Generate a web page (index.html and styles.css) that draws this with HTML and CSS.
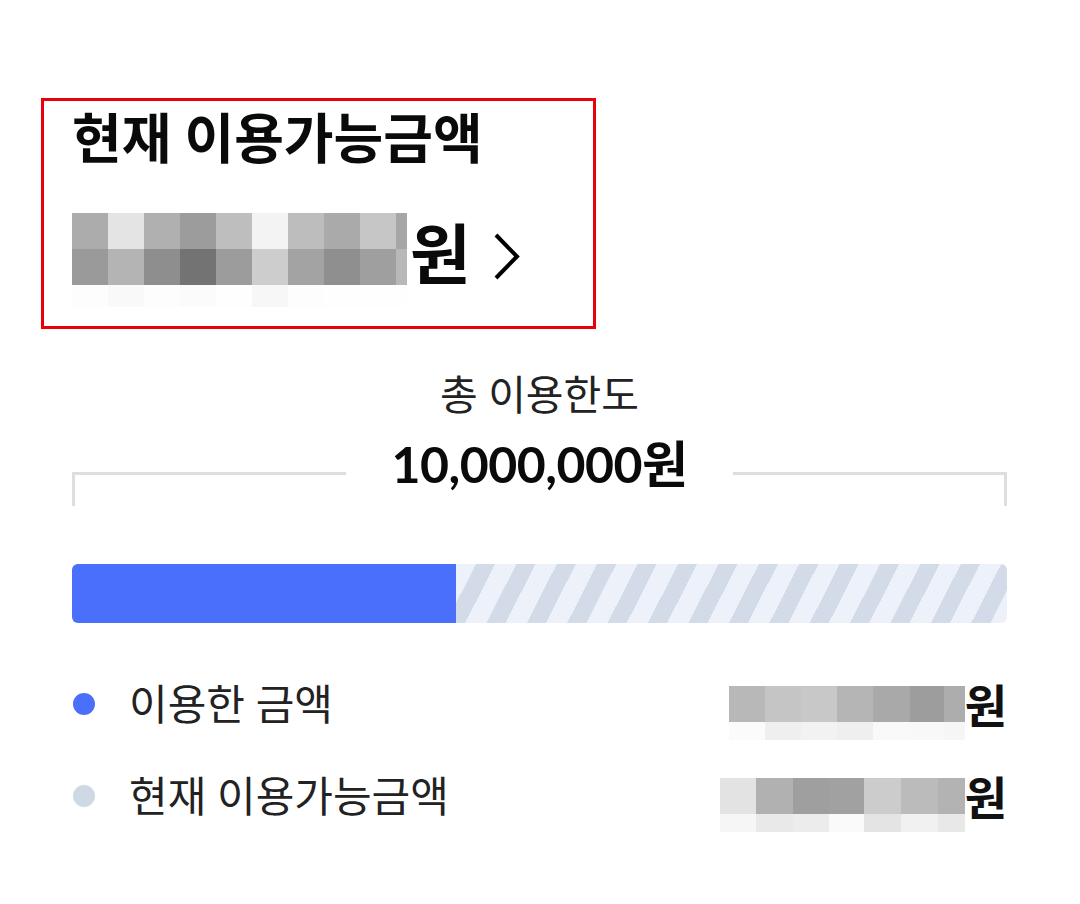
FILE: index.html
```html
<!DOCTYPE html>
<html lang="ko">

<head>
  <meta charset="UTF-8">
  <meta name="viewport" content="width=device-width, initial-scale=1.0">
  <title>이용한도</title>

  <link rel="stylesheet" href="styles.css">
</head>

<body>
  <main class="limit-card">
    <section class="available-box">
      <h1 class="available-title">현재 이용가능금액</h1>
      <a class="available-amount" href="#">
        <span class="mosaic mosaic-main"></span>
        <span class="won won-large">원</span>
        <svg class="chevron" width="30" height="50" viewBox="0 0 30 50" aria-hidden="true">
          <polyline points="3,3 24,24.5 3,46" fill="none" stroke="#000" stroke-width="4" stroke-linejoin="miter"/>
        </svg>
      </a>
    </section>

    <section class="total-limit">
      <p class="total-label">총 이용한도</p>
      <div class="total-row">
        <span class="bracket bracket-left"></span>
        <strong class="total-amount">10,000,000원</strong>
        <span class="bracket bracket-right"></span>
      </div>
    </section>

    <div class="usage-bar">
      <div class="usage-fill" style="width: 41.07%"></div>
    </div>

    <ul class="legend">
      <li class="legend-row">
        <span class="legend-name"><span class="dot dot-used"></span>이용한 금액</span>
        <span class="legend-value"><span class="mosaic mosaic-used"></span><span class="won">원</span></span>
      </li>
      <li class="legend-row">
        <span class="legend-name"><span class="dot dot-left"></span>현재 이용가능금액</span>
        <span class="legend-value"><span class="mosaic mosaic-left"></span><span class="won">원</span></span>
      </li>
    </ul>
  </main>
</body>

</html>
```

FILE: styles.css
```css
body {
  margin: 0;
  background-color: #fff;
  color: #111;
  font-family: Lato, "Noto Sans CJK KR", sans-serif;
}

.limit-card {
  padding: 98px 73px 0 72px;
}

/* red box round the top block */
.available-box {
  box-sizing: border-box;
  width: 555px;
  margin-left: -31px;
  padding: 8px 28px 19px;
  border: 3px solid #e8000b;
}

.available-title {
  margin: 0;
  color: #0a0a0a;
  font-size: 54px;
  line-height: 60px;
  font-weight: 700;
}

.available-amount {
  display: flex;
  align-items: flex-start;
  margin-top: 44px;
  color: #0a0a0a;
  text-decoration: none;
}

.won {
  display: block;
  font-weight: 700;
  font-size: 46px;
  line-height: 46px;
}

.won-large {
  margin: 8px 0 0 3px;
  font-size: 66px;
  line-height: 66px;
}

.chevron {
  margin: 19px 0 0 22px;
}

/* blurred amounts */
.mosaic {
  display: block;
  flex-shrink: 0;
}

.mosaic-main {
  width: 335px;
  height: 94px;
  background:
    linear-gradient(to right, #acacac 0 36px, #e4e4e4 36px 72px, #b0b0b0 72px 108px, #9c9c9c 108px 144px, #bebebe 144px 180px, #f3f3f3 180px 216px, #bdbdbd 216px 252px, #aaaaaa 252px 288px, #c6c6c6 288px 324px, #a6a6a6 324px) 0 0 / 100% 36px no-repeat,
    linear-gradient(to right, #9a9a9a 0 36px, #b4b4b4 36px 72px, #8e8e8e 72px 108px, #737373 108px 144px, #9c9c9c 144px 180px, #cdcdcd 180px 216px, #a3a3a3 216px 252px, #8f8f8f 252px 288px, #9f9f9f 288px 324px, #b8b8b8 324px) 0 36px / 100% 36px no-repeat,
    linear-gradient(to right, #fdfdfd 0 36px, #f9f9f9 36px 72px, #fdfdfd 72px 108px, #fbfbfb 108px 144px, #fefefe 144px 180px, #f7f7f7 180px 216px, #fdfdfd 216px 252px, #fefefe 252px) 0 72px / 100% 22px no-repeat;
}

.mosaic-used {
  width: 236px;
  height: 54px;
  background:
    linear-gradient(to right, #b8b8b8 0 36px, #c5c5c5 36px 72px, #c8c8c8 72px 108px, #b5b5b5 108px 144px, #a9a9a9 144px 181px, #9d9d9d 181px 215px, #adadad 215px) 0 0 / 100% 36px no-repeat,
    linear-gradient(to right, #fbfbfb 0 36px, #efefef 36px 72px, #f2f2f2 72px 108px, #efefef 108px 144px, #f9f9f9 144px 181px, #f8f8f8 181px 215px, #f6f6f6 215px) 0 36px / 100% 18px no-repeat;
}

.mosaic-left {
  width: 245px;
  height: 54px;
  background:
    linear-gradient(to right, #e3e3e3 0 36px, #b1b1b1 36px 73px, #9f9f9f 73px 109px, #a1a1a1 109px 144px, #cccccc 144px 181px, #bbbbbb 181px 218px, #b3b3b3 218px) 0 0 / 100% 36px no-repeat,
    linear-gradient(to right, #f6f6f6 0 36px, #e9e9e9 36px 73px, #ececec 73px 109px, #fafafa 109px 144px, #e4e4e4 144px 181px, #f1f1f1 181px 218px, #e8e8e8 218px) 0 36px / 100% 18px no-repeat;
}

/* total limit */
.total-limit {
  margin-top: 43px;
  text-align: center;
}

.total-label {
  margin: 0;
  color: #222;
  font-size: 41px;
  line-height: 46px;
}

.total-row {
  display: flex;
  align-items: flex-start;
  gap: 46px;
  margin-top: 15px;
}

.total-amount {
  margin-top: 3px;
  color: #0a0a0a;
  font-size: 50px;
  line-height: 56px;
  font-weight: 700;
  letter-spacing: -0.5px;
}

.bracket {
  flex: 1;
  height: 31px;
  margin-top: 39px;
  border-top: 3px solid #dedede;
}

.bracket-left {
  border-left: 3px solid #dedede;
}

.bracket-right {
  border-right: 3px solid #dedede;
}

/* bar */
.usage-bar {
  height: 59px;
  margin-top: 58px;
  border-radius: 6px;
  overflow: hidden;
  background: repeating-linear-gradient(117deg, #d2dbe7 0 17px, #edf1f9 17px 36px);
}

.usage-fill {
  height: 100%;
  background-color: #4a6ffb;
}

/* legend */
.legend {
  margin: 53px 0 0;
  padding: 0;
  list-style: none;
}

.legend-row {
  display: flex;
  justify-content: space-between;
  align-items: flex-start;
}

.legend-row + .legend-row {
  margin-top: 28px;
}

.legend-name {
  display: flex;
  align-items: center;
  color: #222;
  font-size: 42px;
  line-height: 56px;
}

.dot {
  width: 22px;
  height: 22px;
  margin: 0 34px 0 1px;
  border-radius: 50%;
}

.dot-used {
  background-color: #4a6ffb;
}

.dot-left {
  background-color: #cfd9e5;
}

.legend-value {
  display: flex;
  align-items: flex-start;
  margin-top: 10px;
}

.legend-value .won {
  margin-top: -3px;
}
```
